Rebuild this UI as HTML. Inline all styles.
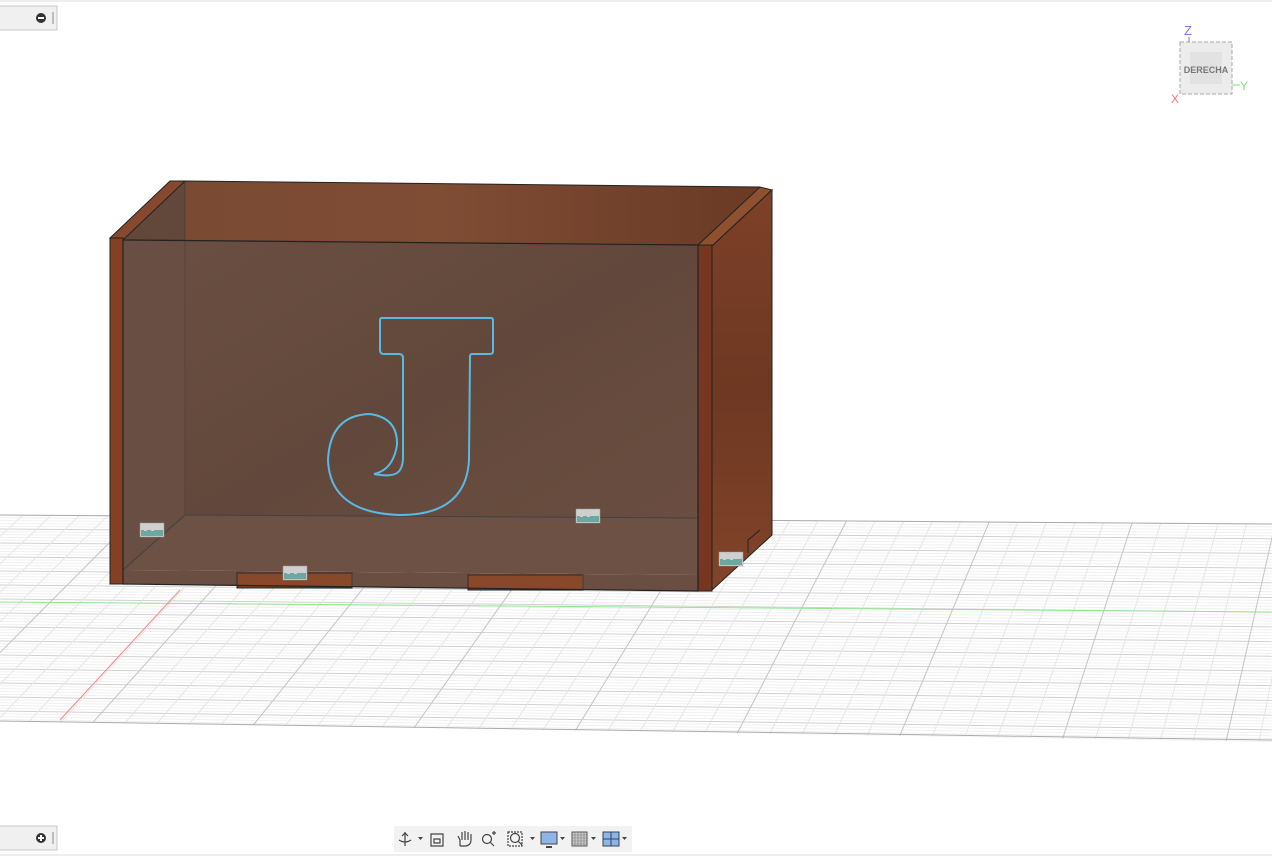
<!DOCTYPE html>
<html><head><meta charset="utf-8"><style>
html,body{margin:0;padding:0;background:#fff;width:1272px;height:856px;overflow:hidden;font-family:"Liberation Sans",sans-serif}
svg{position:absolute;left:0;top:0}
</style></head><body>
<svg width="1272" height="856" viewBox="0 0 1272 856" xmlns="http://www.w3.org/2000/svg">
<defs>
<clipPath id="gc"><polygon points="0,515 1272,524 1272,742 0,721"/></clipPath>
<linearGradient id="wb" x1="0" y1="0" x2="1" y2="1"><stop offset="0" stop-color="#65483b"/><stop offset=".5" stop-color="#5c4033"/><stop offset="1" stop-color="#66483a"/></linearGradient>
<linearGradient id="wt" x1="0" y1="0" x2="1" y2="0"><stop offset="0" stop-color="#7a4a32"/><stop offset=".5" stop-color="#7f4c34"/><stop offset="1" stop-color="#6a3a25"/></linearGradient>
<linearGradient id="ws" x1="0" y1="0" x2="0" y2="1"><stop offset="0" stop-color="#7e4028"/><stop offset=".5" stop-color="#6e3822"/><stop offset="1" stop-color="#82442a"/></linearGradient>
</defs>
<line x1="0" y1="1" x2="1272" y2="1" stroke="#ddd"/>
<line x1="0" y1="855" x2="1272" y2="855" stroke="#ddd"/>
<g id="grid" clip-path="url(#gc)" stroke-width="1"></g>
<line x1="0" y1="515" x2="1272" y2="524" stroke="#aaa"/>
<line x1="0" y1="721" x2="1272" y2="740" stroke="#aaa"/>
<line x1="0" y1="602" x2="1272" y2="612" stroke="#8fe88f" stroke-width="1"/>
<line x1="180" y1="590" x2="60" y2="720" stroke="#f08a8a"/>
<!-- back panel -->
<polygon points="185,181 760,187 698,245 123,240" fill="url(#wt)"/>
<polygon points="123,240 698,245 698,518 185,515 123,570" fill="url(#wb)"/>
<polygon points="123,240 185,181 185,515 123,570" fill="#62473b"/>
<polygon points="185,515 698,518 698,575 123,570" fill="#684a3c"/>
<line x1="185" y1="515" x2="698" y2="518" stroke="#3a3a3a" stroke-width="1"/>
<line x1="185" y1="515" x2="123" y2="570" stroke="#3a3a3a"/>
<line x1="185" y1="181" x2="185" y2="515" stroke="#4a3428" stroke-width=".6"/>
<!-- bottom strip -->
<polygon points="123,570 698,575 698,591 123,584" fill="#65473a"/>
<rect x="237" y="573" width="115" height="15" fill="#84401f" stroke="#222"/>
<rect x="468" y="575" width="115" height="15" fill="#84401f" stroke="#222"/>
<line x1="352" y1="573" x2="352" y2="588" stroke="#333"/><line x1="583" y1="575" x2="583" y2="590" stroke="#333"/>
<!-- left edge -->
<polygon points="110,238 170,181 185,181 123,240" fill="#86492f" stroke="#222" stroke-width="1"/>
<rect x="110" y="238" width="13" height="346" fill="#853f22" stroke="#222"/>
<!-- right side panel -->
<polygon points="698,245 760,187 772,190 712,246" fill="#90502f" stroke="#222"/>
<polygon points="712,246 772,190 772,535 712,590" fill="url(#ws)" stroke="#222"/>
<rect x="698" y="245" width="14" height="346" fill="#763620" stroke="#222"/>
<polyline points="748,553 748,540 760,530" fill="none" stroke="#222"/>
<!-- glass outline -->
<polygon points="123,240 698,245 698,591 123,584" fill="rgba(200,200,200,.06)" stroke="#222" stroke-width="1.2"/>
<line x1="185" y1="181" x2="760" y2="187" stroke="#222"/>
<!-- J -->
<path d="M381,318 L491,318 Q493,318 493,321 L493,351 Q493,354 490,354 L472,354 Q470,354 470,357 L469,460 Q466,515 400,515 Q330,513 328,460 Q330,415 370,414 Q398,418 397,445 Q393,470 374,474 Q395,478 400,470 Q403,465 403,458 L403,358 Q403,354 399,354 L384,354 Q380,354 380,350 L380,320 Q380,318 382,318 Z" fill="none" stroke="#5ab9e4" stroke-width="2"/>
<!-- joint markers -->
<g fill="#cfcfcf" stroke="#999" stroke-width=".5">
<rect x="140" y="523" width="24" height="14"/><rect x="576" y="509" width="24" height="14"/><rect x="283" y="566" width="24" height="14"/><rect x="719" y="552" width="24" height="14"/></g>
<g fill="#6aa8a0"><rect x="141" y="530" width="22" height="6"/><rect x="577" y="516" width="22" height="6"/><rect x="284" y="573" width="22" height="6"/><rect x="720" y="559" width="22" height="6"/></g>
<g fill="#cfcfcf"><rect x="144" y="527" width="3" height="4"/><rect x="151" y="527" width="3" height="4"/><rect x="580" y="513" width="3" height="4"/><rect x="587" y="513" width="3" height="4"/><rect x="287" y="570" width="3" height="4"/><rect x="294" y="570" width="3" height="4"/><rect x="723" y="556" width="3" height="4"/><rect x="730" y="556" width="3" height="4"/></g>
<!-- view cube -->
<rect x="1180" y="42" width="52" height="52" fill="#ececec" stroke="#aaa" stroke-dasharray="4,2"/>
<rect x="1190" y="52" width="32" height="32" fill="#e2e2e2"/>
<text x="1206" y="73" font-size="9" fill="#777" text-anchor="middle" font-weight="bold" font-family="Liberation Sans">DERECHA</text>
<text x="1184" y="35" font-size="13" fill="#7a7aff" font-family="Liberation Sans">Z</text>
<line x1="1189" y1="37" x2="1189" y2="42" stroke="#7a7aff"/>
<text x="1240" y="90" font-size="12" fill="#7ae07a" font-family="Liberation Sans">Y</text>
<line x1="1232" y1="85" x2="1240" y2="85" stroke="#7ae07a"/>
<text x="1171" y="103" font-size="12" fill="#f07a7a" font-family="Liberation Sans">X</text>
<!-- panels -->
<rect x="-1" y="6" width="58" height="24" fill="#f0f0f0" stroke="#c8c8c8"/>
<circle cx="41" cy="18" r="5" fill="#333"/><rect x="38" y="17" width="6" height="2" fill="#fff"/>
<line x1="53" y1="12" x2="53" y2="24" stroke="#888"/>
<rect x="-1" y="826" width="58" height="24" fill="#f0f0f0" stroke="#c8c8c8"/>
<circle cx="41" cy="838" r="5" fill="#333"/><rect x="38" y="837" width="6" height="2" fill="#fff"/><rect x="40" y="835" width="2" height="6" fill="#fff"/>
<line x1="53" y1="832" x2="53" y2="844" stroke="#888"/>
<rect x="394" y="826" width="238" height="26" fill="#f2f2f2"/>
<g stroke="#444" fill="none" stroke-width="1.2">
<path d="M405,832 v14 M399,840 q6,4 12,0 M402,836 l3,-3 l3,3"/>
<path d="M431,834 h12 v12 h-12 z M434,839 h6 v4 h-6z"/>
<path d="M460,846 v-6 l-2,-4 m4,-4 v8 m3,-9 v9 m3,-8 v8 m3,-6 v6 q0,5 -5,6 h-6"/>
<circle cx="487" cy="839" r="4.5"/><path d="M490,842 l4,4 M494,831 v4 M492,833 h4"/>
<rect x="508" y="832" width="14" height="14" stroke-dasharray="2,1"/><circle cx="515" cy="838" r="4.5"/><path d="M518,841 l4,4"/>
</g>
<g fill="#444"><path d="M418,837 h5 l-2.5,3z M530,837 h5 l-2.5,3z M560,837 h5 l-2.5,3z M591,837 h5 l-2.5,3z M622,837 h5 l-2.5,3z"/></g>
<rect x="541" y="832" width="16" height="12" fill="#8fb5e8" stroke="#444"/><path d="M546,847 h6" stroke="#444" stroke-width="2"/>
<rect x="572" y="832" width="15" height="14" fill="#ccc" stroke="#555"/>
<path d="M575,832v14M578,832v14M581,832v14M584,832v14M572,835h15M572,838h15M572,841h15M572,844h15" stroke="#777" stroke-width=".6"/>
<rect x="603" y="832" width="16" height="14" fill="#8fb5e8" stroke="#345"/><path d="M611,832v14M603,839h16" stroke="#345"/>
</svg>
<script>
var g=document.getElementById('grid'),ns='http://www.w3.org/2000/svg';
function L(x1,y1,x2,y2,c){var l=document.createElementNS(ns,'line');l.setAttribute('x1',x1);l.setAttribute('y1',y1);l.setAttribute('x2',x2);l.setAttribute('y2',y2);l.setAttribute('stroke',c);g.appendChild(l);}
var i=0;for(var y=515;y<745;y+=2.8){var maj=(i%5==0);L(0,y,1272,y+9+(y-515)*0.05,maj?'#d0d0d0':'#f0f0f0');i++;}
var vx=1611,vy=-965;
for(var k=-60;k<60;k++){var x=1133+k*28.6;var t=(760-vy)/(520-vy);var xb=vx+(x-vx)*t;L(vx,vy,xb,760,k%5==0?'#c4c4c4':'#e6e6e6');}
</script>
</body></html>
